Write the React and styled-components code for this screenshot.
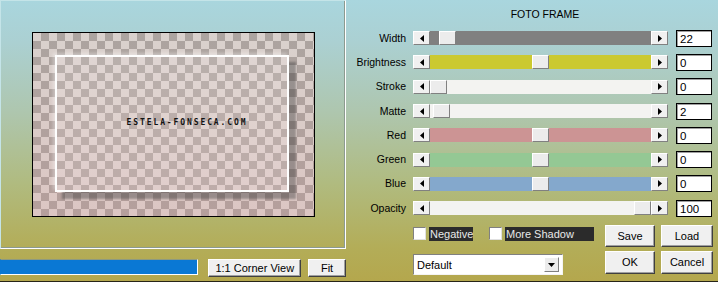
import React from "react";
import styled, { createGlobalStyle } from "styled-components";

const GlobalStyle = createGlobalStyle`
  html, body {
    margin: 0;
    padding: 0;
    background: #b4a94f;
  }
  * { box-sizing: border-box; }
`;

const sliders = [
  { label: "Width", value: "22", pos: 9, track: "#808080" },
  { label: "Brightness", value: "0", pos: 102, track: "#cbc930" },
  { label: "Stroke", value: "0", pos: 0, track: "#f3f3f1" },
  { label: "Matte", value: "2", pos: 3, track: "#f3f3f1" },
  { label: "Red", value: "0", pos: 102, track: "#cc9494" },
  { label: "Green", value: "0", pos: 102, track: "#94c894" },
  { label: "Blue", value: "0", pos: 102, track: "#84a8cc" },
  { label: "Opacity", value: "100", pos: 204, track: "#f3f3f1" },
];

export default function App() {
  return (
    <>
      <GlobalStyle />
      <Window>
        <LeftCol>
          <Preview>
            <Photo>
              <Frame>
                <Watermark>ESTELA-FONSECA.COM</Watermark>
              </Frame>
            </Photo>
          </Preview>
          <PreviewBar>
            <Progress />
            <Button $w={93} $h={18}>1:1 Corner View</Button>
            <Button $w={38} $h={18}>Fit</Button>
          </PreviewBar>
        </LeftCol>

        <Panel>
          <Title>FOTO FRAME</Title>
          <Sliders>
            {sliders.map((s) => (
              <Row key={s.label}>
                <Label>{s.label}</Label>
                <ScrollBar>
                  <ArrowBtn>
                    <svg width="4" height="7" viewBox="0 0 4 7">
                      <polygon points="4,0 0,3.5 4,7" fill="#000" />
                    </svg>
                  </ArrowBtn>
                  <Track $color={s.track}>
                    <Thumb style={{ marginLeft: s.pos }} />
                  </Track>
                  <ArrowBtn>
                    <svg width="4" height="7" viewBox="0 0 4 7">
                      <polygon points="0,0 4,3.5 0,7" fill="#000" />
                    </svg>
                  </ArrowBtn>
                </ScrollBar>
                <ValueBox>{s.value}</ValueBox>
              </Row>
            ))}
          </Sliders>

          <Footer>
            <Options>
              <CheckRow>
                <Check>
                  <CheckBox />
                  <CheckLabel $w={44}>Negative</CheckLabel>
                </Check>
                <Check>
                  <CheckBox />
                  <CheckLabel $w={89}>More Shadow</CheckLabel>
                </Check>
              </CheckRow>
              <Select>
                <span>Default</span>
                <SelectBtn>
                  <svg width="7" height="4" viewBox="0 0 7 4">
                    <polygon points="0,0 7,0 3.5,4" fill="#000" />
                  </svg>
                </SelectBtn>
              </Select>
            </Options>
            <ButtonGrid>
              <Button $h={22}>Save</Button>
              <Button $h={22}>Load</Button>
              <Button $h={23}>OK</Button>
              <Button $h={23}>Cancel</Button>
            </ButtonGrid>
          </Footer>
        </Panel>
      </Window>
    </>
  );
}

const Window = styled.div`
  width: 718px;
  height: 282px;
  display: flex;
  background: linear-gradient(
    to bottom,
    #a9d6de 0%,
    #abd0d2 15%,
    #aec6ae 40%,
    #b0bb80 65%,
    #b3ad58 88%,
    #b4a74d 100%
  );
  border-bottom: 1px solid #262418;
  font-family: "Liberation Sans", Arial, sans-serif;
  font-size: 10.5px;
  color: #000;
  overflow: hidden;
`;

const LeftCol = styled.div`
  width: 346px;
  display: flex;
  flex-direction: column;
`;

const Preview = styled.div`
  height: 249px;
  padding: 31px 0 0 31px;
  border-top: 1px solid #c4e4e8;
  border-left: 1px solid #c4e4e8;
  border-right: 1px solid #fff;
  border-bottom: 1px solid #fff;
  box-shadow: inset -1px -1px 0 #8c9a90;
`;

const Photo = styled.div`
  width: 283px;
  height: 185px;
  border: 1px solid #000;
  padding: 22px 0 0 22px;
  background-image:
    linear-gradient(
      to bottom,
      rgba(215, 215, 210, 0.12),
      rgba(225, 165, 165, 0.25)
    ),
    conic-gradient(#a69d99 25%, #dad1cd 0 50%, #a69d99 0 75%, #dad1cd 0);
  background-size: 100% 100%, 16px 16px;
`;

const Frame = styled.div`
  width: 234px;
  height: 137px;
  border: 2px solid #fff;
  background: rgba(255, 245, 245, 0.14);
  box-shadow: 7px 7px 2px rgba(60, 60, 60, 0.42),
    -2px -2px 3px rgba(255, 255, 255, 0.35);
  display: flex;
  align-items: center;
  justify-content: center;
  padding: 0 0 2px 30px;
`;

const Watermark = styled.span`
  font-family: "DejaVu Sans Mono", monospace;
  font-size: 8px;
  font-weight: bold;
  letter-spacing: 1.9px;
  color: #141414;
`;

const PreviewBar = styled.div`
  display: flex;
  align-items: flex-start;
  padding-top: 10px;
`;

const Progress = styled.div`
  width: 199px;
  height: 16px;
  background: #0a78d4;
  border: 1px solid;
  border-color: #8e9a80 #fff #fff #0a78d4;
  margin-right: 10px;
`;

const Button = styled.div`
  width: ${(p) => (p.$w ? `${p.$w}px` : "auto")};
  height: ${(p) => p.$h}px;
  margin-right: 7px;
  display: flex;
  align-items: center;
  justify-content: center;
  background: #f0f0f0;
  border: 1px solid;
  border-color: #fff #404040 #404040 #fff;
  box-shadow: inset -1px -1px 0 #a0a0a0;
  font-size: 11px;
  padding-bottom: 1px;
  &:last-child { margin-right: 0; }
`;

const Panel = styled.div`
  flex: 1;
  display: flex;
  flex-direction: column;
`;

const Title = styled.div`
  margin-top: 7px;
  height: 14px;
  line-height: 14px;
  padding-left: 26px;
  text-align: center;
`;

const Sliders = styled.div`
  margin-top: 5px;
  display: flex;
  flex-direction: column;
`;

const Row = styled.div`
  height: 24.3px;
  display: flex;
  align-items: center;
`;

const Label = styled.div`
  width: 60px;
  text-align: right;
  margin-right: 7px;
  padding-bottom: 1px;
`;

const ScrollBar = styled.div`
  width: 255px;
  height: 14px;
  display: flex;
  margin-right: 8px;
`;

const ArrowBtn = styled.div`
  width: 17px;
  height: 14px;
  display: flex;
  align-items: center;
  justify-content: center;
  background: #f0f0f0;
  border: 1px solid;
  border-color: #fff #808080 #808080 #fff;
`;

const Track = styled.div`
  flex: 1;
  display: flex;
  background: ${(p) => p.$color};
`;

const Thumb = styled.div`
  width: 17px;
  height: 14px;
  background: #ececec;
  border: 1px solid;
  border-color: #fff #808080 #808080 #fff;
`;

const ValueBox = styled.div`
  width: 36px;
  height: 17px;
  background: #fff;
  border: 1px solid #000;
  box-shadow: inset 1px 1px 0 #a0a0a0;
  padding: 1px 0 0 3px;
  font-size: 11.5px;
  line-height: 14px;
`;

const Footer = styled.div`
  display: flex;
  padding: 5px 0 0 67px;
`;

const Options = styled.div`
  width: 192px;
  display: flex;
  flex-direction: column;
  padding-top: 1px;
`;

const CheckRow = styled.div`
  display: flex;
  gap: 16px;
  height: 15px;
  align-items: center;
`;

const Check = styled.div`
  display: flex;
  align-items: center;
  gap: 3px;
`;

const CheckBox = styled.div`
  width: 13px;
  height: 13px;
  background: #fff;
  border: 1px solid;
  border-color: #808080 #e0e0e0 #e0e0e0 #808080;
`;

const CheckLabel = styled.div`
  width: ${(p) => p.$w}px;
  height: 14px;
  line-height: 14px;
  background: #2b2b2b;
  color: #e8e8e8;
  padding-left: 1px;
  font-size: 11px;
`;

const Select = styled.div`
  margin-top: 13px;
  width: 150px;
  height: 21px;
  display: flex;
  align-items: center;
  justify-content: space-between;
  background: #fff;
  border: 1px solid;
  border-color: #808080 #f4f4f4 #f4f4f4 #808080;
  padding: 0 3px 0 3px;
  font-size: 11px;
`;

const SelectBtn = styled.div`
  width: 15px;
  height: 15px;
  display: flex;
  align-items: center;
  justify-content: center;
  background: #ececec;
  border: 1px solid;
  border-color: #fff #808080 #808080 #fff;
`;

const ButtonGrid = styled.div`
  display: grid;
  grid-template-columns: 50px 52px;
  column-gap: 6px;
  row-gap: 4px;
  align-content: start;
  & > div { margin-right: 0; }
`;
